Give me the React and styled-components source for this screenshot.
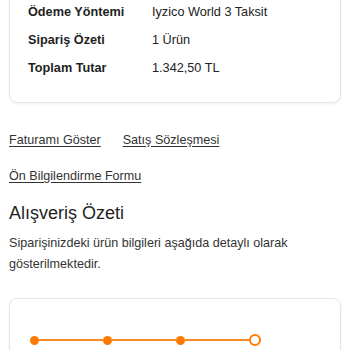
import React from 'react';
import styled, { createGlobalStyle } from 'styled-components';

const Global = createGlobalStyle`
    body {
        margin: 0;
        background: #fff;
        font-family: "Liberation Sans", Arial, sans-serif;
        color: #222;
    }
`

const Page = styled.div`
    padding: 0 9px;
    overflow: hidden;
    height: 350px;
`

const Card = styled.section`
    border: 1px solid #e7e7e7;
    border-radius: 8px;
    box-shadow: 0 1px 3px rgba(0, 0, 0, 0.06);
    background: #fff;
`

const SummaryCard = styled(Card)`
    margin-top: -10px;
    border-top-left-radius: 0;
    border-top-right-radius: 0;
    padding: 7px 18px 20px;
`

const Row = styled.div`
    display: flex;
    height: 28px;
    align-items: center;
    font-size: 12.7px;
`

const Label = styled.span`
    width: 124px;
    font-weight: 700;
    color: #1f1f1f;
`

const Value = styled.span`
    color: #222;
`

const Links = styled.div`
    display: flex;
    flex-wrap: wrap;
    column-gap: 22px;
    row-gap: 16px;
    margin-top: 27px;
    width: 240px;
`

const Link = styled.a`
    font-size: 12.6px;
    line-height: 20px;
    color: #333;
    text-decoration: underline;
    text-underline-offset: 2px;
`

const Heading = styled.h2`
    margin: 15px 0 0;
    font-size: 18px;
    font-weight: 400;
    line-height: 24px;
    color: #1f1f1f;
`

const Text = styled.p`
    margin: 8px 0 0;
    font-size: 12.6px;
    line-height: 21px;
    color: #333;
`

const StepCard = styled(Card)`
    margin-top: 23px;
    padding: 35px 20px 20px;
`

const Stepper = styled.div`
    display: flex;
    align-items: center;
`

const Dot = styled.span`
    flex: 0 0 auto;
    width: ${p => (p.$open ? '8px' : '9px')};
    height: ${p => (p.$open ? '8px' : '9px')};
    border-radius: 50%;
    background: ${p => (p.$open ? '#fff' : '#ff7a00')};
    border: ${p => (p.$open ? '2px solid #ff7a00' : 'none')};
`

const Segment = styled.span`
    flex: 0 0 64px;
    height: 2px;
    background: #f7882a;
`

const rows = [
    ['Ödeme Yöntemi', 'Iyzico World 3 Taksit'],
    ['Sipariş Özeti', '1 Ürün'],
    ['Toplam Tutar', '1.342,50 TL'],
]

function App() {
    return (
        <>
            <Global />
            <Page>
                <SummaryCard>
                    {rows.map(([k, v]) => (
                        <Row key={k}>
                            <Label>{k}</Label>
                            <Value>{v}</Value>
                        </Row>
                    ))}
                </SummaryCard>
                <Links>
                    <Link href="#">Faturamı Göster</Link>
                    <Link href="#">Satış Sözleşmesi</Link>
                    <Link href="#">Ön Bilgilendirme Formu</Link>
                </Links>
                <Heading>Alışveriş Özeti</Heading>
                <Text>Siparişinizdeki ürün bilgileri aşağıda detaylı olarak gösterilmektedir.</Text>
                <StepCard>
                    <Stepper>
                        <Dot />
                        <Segment />
                        <Dot />
                        <Segment />
                        <Dot />
                        <Segment />
                        <Dot $open />
                    </Stepper>
                </StepCard>
            </Page>
        </>
    )
}

export default App
